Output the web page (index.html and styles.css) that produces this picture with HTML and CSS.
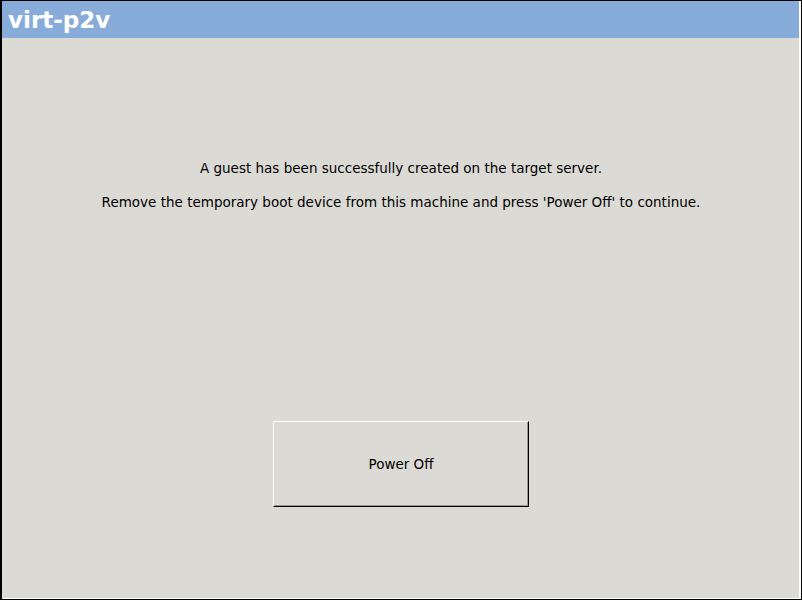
FILE: index.html
```html
<!DOCTYPE html>
<html>
<head>
<meta charset="utf-8">
<link rel="stylesheet" href="styles.css">
</head>
<body>
<div class="frame">
  <div class="titlebar">virt-p2v</div>
  <div class="content">
    <div class="messages">
      <p class="msg">A guest has been successfully created on the target server.</p>
      <p class="msg">Remove the temporary boot device from this machine and press 'Power Off' to continue.</p>
    </div>
    <div class="actions">
      <button class="btn">Power Off</button>
    </div>
  </div>
</div>
</body>
</html>
```
FILE: styles.css
```css
html, body {
  margin: 0;
  padding: 0;
  width: 802px;
  height: 600px;
  overflow: hidden;
  background: #dcdad5;
}
.frame {
  box-sizing: border-box;
  width: 802px;
  height: 600px;
  border-top: 1px solid #000;
  border-left: 2px solid #000;
  border-right: 1px solid #000;
  border-bottom: 1px solid #000;
  display: flex;
  flex-direction: column;
  font-family: "DejaVu Sans", sans-serif;
}
.titlebar {
  height: 37px;
  background: #87acd9;
  color: #fff;
  font-weight: bold;
  font-size: 23px;
  line-height: 38px;
  padding-left: 6px;
  border-right: 2px solid #fff;
}
.content {
  flex: 1;
  background: #dcdad5;
  border-left: 1px solid #dcdad5;
  border-right: 2px solid #fff;
  border-bottom: 1px solid #fff;
  display: flex;
  flex-direction: column;
  align-items: center;
}
.messages {
  margin-top: 122px;
  text-align: center;
}
.msg {
  margin: 0 0 17px 0;
  font-size: 13.5px;
  line-height: 17px;
  color: #000;
}
.actions {
  margin-top: 193px;
}
.btn {
  box-sizing: border-box;
  width: 256px;
  height: 86px;
  background: #dcdad5;
  border-top: 1px solid #fff;
  border-left: 1px solid #fff;
  border-right: 1px solid #000;
  border-bottom: 1px solid #000;
  box-shadow: inset -1px -1px 0 #9a9893;
  font-family: "DejaVu Sans", sans-serif;
  font-size: 13.5px;
  color: #000;
  padding: 0;
  margin-left: 0;
}
```
